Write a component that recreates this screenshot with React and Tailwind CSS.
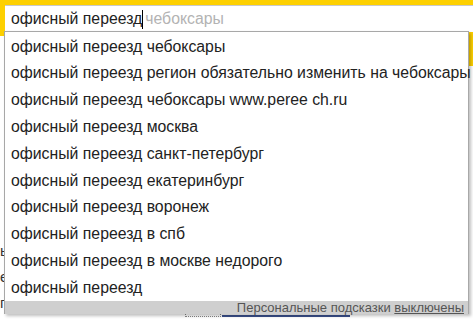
import React from "react";

const items = [
  "офисный переезд чебоксары",
  "офисный переезд регион обязательно изменить на чебоксары",
  "офисный переезд чебоксары www.peree ch.ru",
  "офисный переезд москва",
  "офисный переезд санкт-петербург",
  "офисный переезд екатеринбург",
  "офисный переезд воронеж",
  "офисный переезд в спб",
  "офисный переезд в москве недорого",
  "офисный переезд",
];

const font = { fontFamily: '"Liberation Sans", Arial, sans-serif' };

export default function App() {
  return (
    <div className="relative w-[473px] h-[321px] overflow-hidden bg-white" style={font}>
      {/* page behind the suggest box */}
      <div className="h-[36px] bg-[#fdd000]" />
      <div className="absolute right-0 top-[36px] w-[5px] h-[30px] bg-[#fdd000]" />
      <div className="absolute left-0 top-[238px] text-[15px] leading-[26px] text-[#333]">
        <div>ы</div>
        <div>е</div>
        <div>п</div>
      </div>
      <div className="absolute left-[185px] top-[313px] w-[36px] h-[4px] border border-dotted border-[#888]" />
      <div className="absolute left-[222px] top-[315px] w-[128px] h-[2px] bg-[#3a4f8a]" />

      {/* search input */}
      <div className="absolute left-[5px] top-[5px] right-0 h-[27px] bg-white border-t border-[#c9c9c9] flex items-center pl-[6px] text-[15.8px]">
        <span className="text-[#222]">офисный переезд</span>
        <span className="w-px h-[19px] bg-black" />
        <span className="text-[#b3b3b3] pl-[2px]">чебоксары</span>
      </div>

      {/* suggestions */}
      <div className="absolute left-[4px] top-[31px] w-[465px] h-[283px] bg-white border border-[#a8a8a8] shadow-[2px_2px_3px_rgba(0,0,0,0.25)] flex flex-col">
        <div className="flex-1 flex flex-col pt-px">
          {items.map((t) => (
            <div key={t} className="h-[26.8px] flex items-center pl-[6px] text-[15.8px] text-[#222] whitespace-nowrap">
              {t}
            </div>
          ))}
        </div>
        <div className="h-[14px] bg-[#cfcfcf] flex items-center justify-end pr-[4px] text-[13px] text-[#555] leading-none">
          Персональные подсказки&nbsp;<span className="underline">выключены</span>
        </div>
      </div>
    </div>
  );
}
